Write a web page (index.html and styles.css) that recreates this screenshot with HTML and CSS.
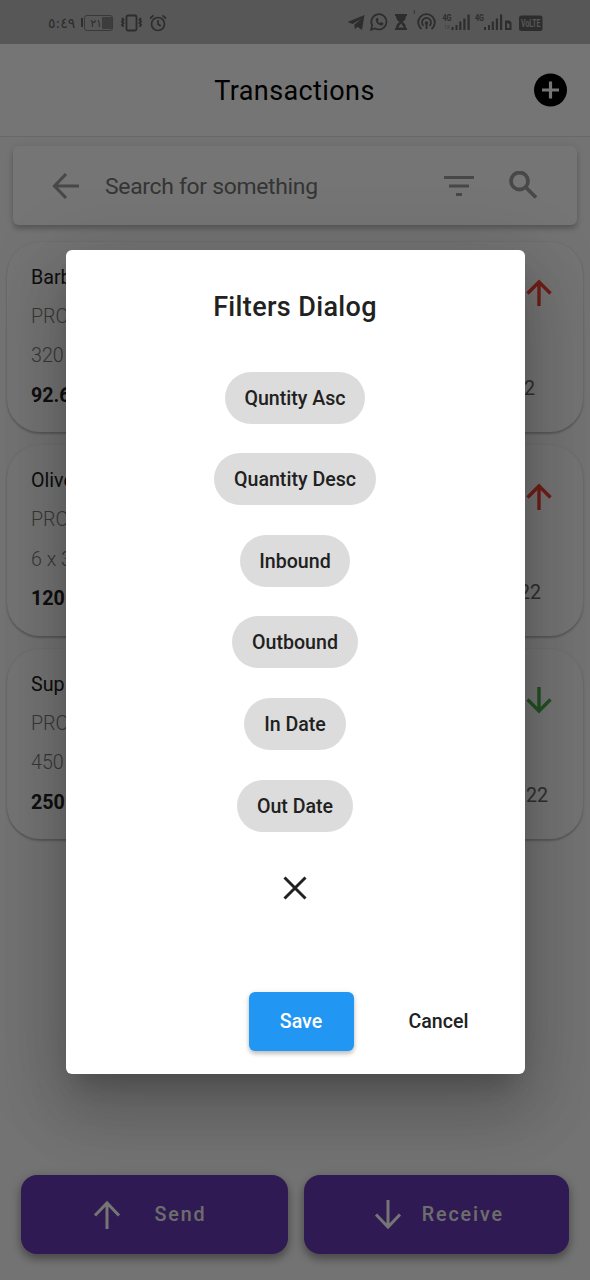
FILE: index.html
```html
<!DOCTYPE html>
<html lang="en">
<head>
<meta charset="utf-8">
<title>Transactions</title>
<link rel="stylesheet" href="styles.css">
</head>
<body>
<div class="screen">
  <header class="status">
    <div class="status-left">
      <bdo class="clock" dir="ltr">٥:٤٩</bdo>
      <span class="battery"><bdo dir="ltr">٢١</bdo><i></i></span>
      <svg class="vibrate" width="23" height="18" viewBox="0 0 23 18" fill="none" stroke="currentColor"><rect x="6.5" y="1.5" width="10" height="15" rx="1.5" stroke-width="1.8"/><path d="M2 4l1.500 1.700-1.500 1.700 1.500 1.700-1.500 1.700 1.500 2M21 4l-1.500 1.700 1.500 1.700-1.500 1.700 1.500 1.700-1.500 2" stroke-width="1.9"/></svg>
      <svg class="alarm" width="18" height="18" viewBox="0 0 18 18" fill="none" stroke="currentColor" stroke-width="1.7"><circle cx="9" cy="10" r="6.5"/><path d="M9 6v4l2.7 2M1 4.5L4.5 1.300M17 4.500L13.500 1.300"/></svg>
    </div>
    <div class="status-right">
      <svg width="198" height="26" viewBox="0 0 198 26" fill="currentColor">
        <path d="M.5 14L17.500 7l-2.500 15-4.500-3.300-2.600 2.600-.6-4.600 7-6-8.700 5.300z"/>
        <path d="M24 21.700l1.200-4.200a7.600 7.600 0 1 1 3 3z" fill="none" stroke="currentColor" stroke-width="1.700"/>
        <path d="M29 10.500c-1.200 4 3.500 8 6.700 6.700l.8-1.900-2.400-1.200-1.200 1.200c-1-.5-1.700-1.200-2.100-2.200l.9-1.100-1-2.200z"/>
        <path d="M48 6h12v2h-1c0 3-1.500 5-3.500 6 2 1 3.500 3 3.500 6h1v2H48v-2h1c0-3 1.500-5 3.500-6-2-1-3.500-3-3.500-6h-1z"/><path d="M51 19.500l3-4 3 4z" fill="#bdbdbd"/>
        <path d="M66.500 3l1.500-1v4h-1z" opacity=".7"/>
        <g fill="none" stroke="currentColor" stroke-width="1.800"><path d="M74.500 21a8.300 8.300 0 1 1 10 0"/><path d="M76.500 17.800a4.500 4.500 0 1 1 6 0"/></g><circle cx="79.500" cy="15" r="1.800"/><path d="M78.500 15h2v6h-2z"/>
        <text class="net" x="95.500" y="13" textLength="9" lengthAdjust="spacingAndGlyphs">4G</text><text class="tiny" x="97" y="21">1X</text>
        <path d="M104.500 19h2v3h-2zm4-2h2v5h-2zm3.700-3.500h2.200V22h-2.200zm4.100-3h2.200V22h-2.200zM120.500 6.500h2.200V22h-2.200z"/>
        <text class="net" x="128" y="13" textLength="9" lengthAdjust="spacingAndGlyphs">4G</text>
        <path d="M137 19h2v3h-2zm4-2h2v5h-2zm3.700-3.500h2.200V22h-2.200zm4.100-3h2.200V22h-2.200zM153 6.500h2.200V22H153z"/>
        <path d="M158 12.500h4.500l2 2V22H158zM160 15v5h2.500v-4z" fill-rule="evenodd"/>
        <rect x="172" y="7.500" width="23.500" height="15.500" rx="2.500"/><text class="volte" x="174" y="18.800" textLength="19.500" lengthAdjust="spacingAndGlyphs">VoLTE</text>
      </svg>
    </div>
  </header>
  <div class="appbar">
    <h1>Transactions</h1>
    <svg class="add" width="34" height="34" viewBox="0 0 34 34"><circle cx="16.500" cy="17" r="16.500"/><path d="M16.500 8.500v17M8 17h17" stroke="#fff" stroke-width="3.200"/></svg>
  </div>
  <div class="search">
    <svg class="back" width="28" height="28" viewBox="0 0 28 28"><path d="M27 14H3M14 2L2.500 14 14 26"/></svg>
    <span class="hint">Search for something</span>
    <svg class="filter" width="30" height="22" viewBox="0 0 30 22"><path d="M0 2.500h30M5 11h20M12 19.500h6"/></svg>
    <svg class="find" width="29" height="29" viewBox="0 0 29 29"><circle cx="10.500" cy="10" r="8.500"/><path d="M16.500 16l10.500 10.500"/></svg>
  </div>
  <main class="list">
    <article class="card">
      <div class="info"><p class="name">Barb</p><p class="thin">PRO</p><p class="thin">320</p><p class="amount">92.6</p></div>
      <div class="side"><svg class="arrow out" viewBox="0 0 28 28"><path d="M14 27V3M2.500 14.500L14 3l11.500 11.500"/></svg><span class="date short">22</span></div>
    </article>
    <article class="card">
      <div class="info"><p class="name">Olive</p><p class="thin">PRO</p><p class="thin">6 x 3</p><p class="amount">120</p></div>
      <div class="side"><svg class="arrow out" viewBox="0 0 28 28"><path d="M14 27V3M2.500 14.500L14 3l11.500 11.500"/></svg><span class="date medium">22</span></div>
    </article>
    <article class="card">
      <div class="info"><p class="name">Sup</p><p class="thin">PRO</p><p class="thin">450</p><p class="amount">250</p></div>
      <div class="side"><svg class="arrow in" viewBox="0 0 28 28"><path d="M14 1v24M2.500 13.500L14 25l11.500-11.500"/></svg><span class="date">022</span></div>
    </article>
  </main>
  <footer class="actions">
    <div class="action send"><svg viewBox="0 0 28 30"><path d="M14 29V3M2 15.500L14 3l12 12.500"/></svg><span>Send</span></div>
    <div class="action receive"><svg viewBox="0 0 28 30"><path d="M14 0v27M2 14.500L14 27l12-12.500"/></svg><span>Receive</span></div>
  </footer>
</div>
<div class="scrim">
  <section class="dialog">
    <h2>Filters Dialog</h2>
    <div class="chips">
      <span class="chip">Quntity Asc</span>
      <span class="chip">Quantity Desc</span>
      <span class="chip">Inbound</span>
      <span class="chip">Outbound</span>
      <span class="chip">In Date</span>
      <span class="chip">Out Date</span>
    </div>
    <svg class="close" width="24" height="24" viewBox="0 0 24 24"><path d="M1.500 1.500l21 21M22.500 1.500l-21 21"/></svg>
    <div class="buttons"><span class="save">Save</span><span class="cancel">Cancel</span></div>
  </section>
</div>
</body>
</html>
```
FILE: styles.css
```css
* { box-sizing: border-box; }
body { margin: 0; font-family: Roboto, sans-serif; color: #212121; }
h1, h2, p { margin: 0; }
svg { display: block; flex: none; }
.screen { display: flex; flex-direction: column; width: 590px; height: 1280px; background: #fafafa; overflow: hidden; }

.status { flex: none; display: flex; justify-content: space-between; height: 44px; padding: 0 45px 0 48px; background: #bdbdbd; color: #626262; }
.status-left { display: flex; align-items: center; height: 46px; }
.clock { width: 33px; font: 14px/20px "DejaVu Sans", sans-serif; white-space: nowrap; }
.battery { position: relative; display: flex; align-items: center; justify-content: flex-end; width: 29px; height: 16px; margin-left: 3px; border: 1.500px solid #7c7c7c; border-radius: 3px; font: 11px/13px "DejaVu Sans", sans-serif; }
.battery::before { content: ""; position: absolute; left: -4px; top: 2px; width: 2px; height: 9px; background: currentColor; }
.battery i { width: 10px; height: 12px; margin-left: 0; background: #858585; }
.vibrate { margin-left: 7px; }
.alarm { margin-left: 6px; }
.status-right { width: 198px; padding-top: 8px; }
.net { font: 700 9px Roboto, sans-serif; }
.tiny { font: 5px Roboto, sans-serif; opacity: .6; }
.volte { font: 700 10px Roboto, sans-serif; fill: #bdbdbd; }

.appbar { flex: none; display: flex; align-items: center; height: 93px; padding: 0 22px; background: #fff; border-bottom: 1px solid #e2e2e2; color: #000; }
.appbar h1 { flex: 1; padding: 2px 0 0 33px; text-align: center; font-size: 27px; font-weight: 400; letter-spacing: .4px; }
.add { fill: #000; }

.search { flex: none; display: flex; align-items: center; height: 79px; margin: 9px 13px 0; padding: 0 39px; background: #fff; border-radius: 6px; box-shadow: 0 4px 5px rgba(0,0,0,.18), 0 1px 9px rgba(0,0,0,.1); color: #9e9e9e; }
.search svg { fill: none; stroke: currentColor; stroke-width: 3.200; }
.hint { flex: 1; margin-left: 25px; padding-top: 1px; color: #757575; font-size: 22.900px; letter-spacing: -.3px; }
.filter { margin-right: 35px; }
.search .find { stroke-width: 3.800; }

.list { flex: none; display: flex; flex-direction: column; gap: 13px; padding: 16.500px 7px 0; }
.card { display: flex; justify-content: space-between; height: 190.500px; padding: 16px 30px 0 24px; background: #fcfcfc; border-radius: 33px; box-shadow: 0 1.500px 2px rgba(0,0,0,.22), 0 0 3px rgba(0,0,0,.06); font-size: 19.670px; }
.info p { height: 39.400px; line-height: 39.400px; }
.thin { font-weight: 300; color: #7b7b7b; }
.amount { font-weight: 700; }
.side { display: flex; flex-direction: column; align-items: flex-end; }
.arrow { width: 28px; height: 28px; margin-top: 21.500px; fill: none; stroke-width: 3.400; }
.out { stroke: #f44336; }
.in { stroke: #4caf50; }
.date { margin: 70px 5px 0 0; line-height: 24px; color: #6a6a6a; }
.short { margin-right: 18px; }
.medium { margin-right: 12px; }

.actions { flex: none; display: flex; gap: 16px; margin-top: auto; padding: 0 21.500px 26px 21px; }
.action { flex: 1; display: flex; align-items: center; height: 79px; background: #673ab7; border-radius: 16px; box-shadow: 0 5px 9px rgba(0,0,0,.3), 0 2px 12px rgba(0,0,0,.14); color: #fff; font-size: 19.670px; letter-spacing: 1.900px; font-weight: 500; }
.action span { color: #eee; }
.action svg { width: 28px; height: 30px; fill: none; stroke: currentColor; stroke-width: 3; }
.send { padding-left: 72px; }
.send span { margin-left: 33.500px; }
.receive { padding-left: 70px; }
.receive span { margin-left: 20px; }

.scrim { position: absolute; left: 0; top: 0; display: flex; align-items: center; justify-content: center; width: 590px; height: 1280px; padding-top: 44px; background: rgba(0,0,0,.54); }
.dialog { display: flex; flex-direction: column; align-items: center; width: 459px; height: 824px; padding-top: 41px; background: #fff; border-radius: 6px; box-shadow: 0 18px 25px -11px rgba(0,0,0,.2), 0 39px 62px 5px rgba(0,0,0,.14), 0 15px 75px 13px rgba(0,0,0,.12); }
.dialog h2 { font-size: 27px; line-height: 32px; font-weight: 500; letter-spacing: .35px; }
.chips { display: flex; flex-direction: column; align-items: center; gap: 29.600px; margin-top: 48.600px; }
.chip { height: 52px; padding: 1px 19.700px 0; border-radius: 26px; background: #dcdcdc; font-size: 19.600px; line-height: 52px; font-weight: 500; white-space: nowrap; }
.close { margin-top: 44px; fill: none; stroke: #212121; stroke-width: 3; }
.buttons { align-self: flex-end; display: flex; align-items: center; margin: 92px 56px 0 0; font-size: 19.600px; font-weight: 500; }
.save { width: 105px; height: 59px; border-radius: 6px; background: #2196f3; color: #fff; text-align: center; line-height: 59px; box-shadow: 0 3px 4px rgba(0,0,0,.2), 0 1px 6px rgba(0,0,0,.1); }
.cancel { margin-left: 55px; }
```
